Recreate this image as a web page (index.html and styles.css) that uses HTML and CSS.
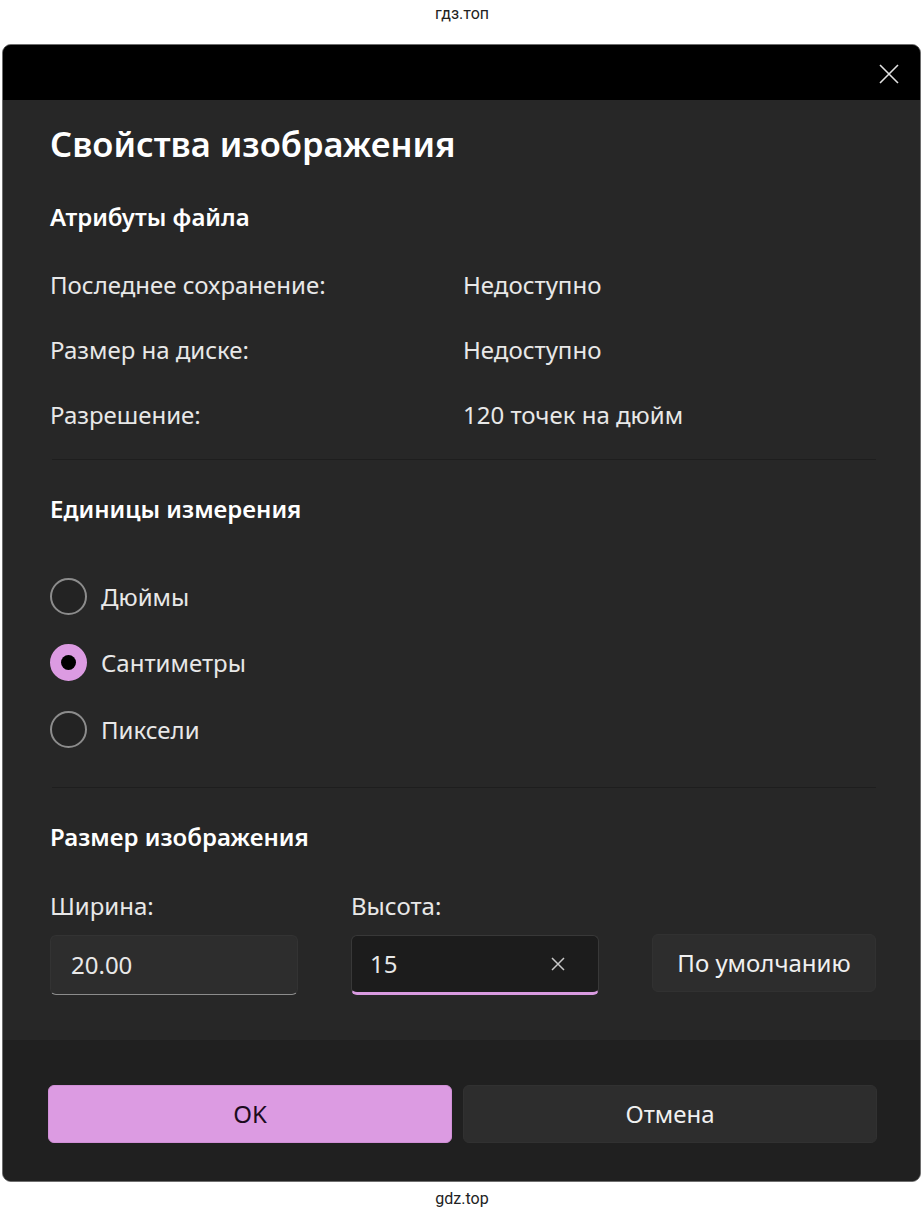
FILE: index.html
```html
<!DOCTYPE html>
<html lang="ru">

<head>
  <meta charset="utf-8" />
  <meta name="viewport" content="width=device-width, initial-scale=1" />
  <title>Свойства изображения</title>
  <link rel="stylesheet" href="styles.css">
</head>

<body>
  <div class="watermark watermark-top">гдз.топ</div>

  <div class="dialog">
    <div class="dialog-bar">
      <button type="button" class="close" aria-label="Закрыть">
        <svg width="20" height="20" viewBox="0 0 20 20">
          <path d="M1 1 L19 19 M19 1 L1 19" stroke="#e2e2e2" stroke-width="1.6" fill="none" />
        </svg>
      </button>
    </div>

    <div class="dialog-body">
      <h1>Свойства изображения</h1>

      <h2>Атрибуты файла</h2>
      <div class="info">
        <span>Последнее сохранение:</span><span>Недоступно</span>
        <span>Размер на диске:</span><span>Недоступно</span>
        <span>Разрешение:</span><span>120 точек на дюйм</span>
      </div>

      <hr class="divider">

      <h2 class="units-title">Единицы измерения</h2>
      <div class="radios">
        <div class="radio"><span class="dot"></span>Дюймы</div>
        <div class="radio checked"><span class="dot"></span>Сантиметры</div>
        <div class="radio"><span class="dot"></span>Пиксели</div>
      </div>

      <hr class="divider divider-low">

      <h2 class="units-title">Размер изображения</h2>
      <div class="size-grid">
        <span class="label">Ширина:</span>
        <span class="label">Высота:</span>
        <span></span>

        <div class="field">20.00</div>
        <div class="field focused">
          <span>15</span>
          <svg width="16" height="16" viewBox="0 0 16 16">
            <path d="M2 2 L14 14 M14 2 L2 14" stroke="#c8c8c8" stroke-width="1.5" fill="none" />
          </svg>
        </div>
        <button type="button" class="btn btn-default">По умолчанию</button>
      </div>
    </div>

    <div class="dialog-footer">
      <button type="button" class="btn btn-primary">OK</button>
      <button type="button" class="btn">Отмена</button>
    </div>
  </div>

  <div class="watermark watermark-bottom">gdz.top</div>
</body>

</html>
```

FILE: styles.css
```css
body {
  margin: 0;
  background: #fff;
  font-family: "Noto Sans", "Open Sans", sans-serif;
  color: #e8e8e8;
}

.watermark {
  font-family: Roboto, "Liberation Sans", sans-serif;
  font-size: 16px;
  color: #222;
  text-align: center;
}

.watermark-top {
  height: 44px;
  line-height: 28px;
}

.watermark-bottom {
  line-height: 34px;
}

.dialog {
  margin-left: 2px;
  width: 917px;
  border: 1px solid #6e6e6e;
  border-radius: 9px;
  overflow: hidden;
  background: #272727;
}

.dialog-bar {
  height: 55px;
  background: #000;
  display: flex;
  justify-content: flex-end;
  align-items: center;
  padding-right: 21px;
}

.close {
  background: none;
  border: 0;
  padding: 0;
  width: 20px;
  height: 20px;
  margin-top: 2px;
}

.dialog-body {
  padding: 22px 44px 45px 47px;
}

h1 {
  margin: 0;
  font-size: 34.5px;
  font-weight: 600;
  line-height: 44px;
  color: #fff;
}

h2 {
  margin: 36px 0 20px;
  font-size: 24px;
  font-weight: 600;
  line-height: 30px;
  color: #fff;
}

.info {
  display: grid;
  grid-template-columns: 413px 1fr;
  grid-auto-rows: 65px;
  align-items: center;
  font-size: 24px;
}

.divider {
  margin: 12px 0 0 2px;
  border: 0;
  height: 1px;
  background: #1e1e1e;
}

.divider-low {
  margin-top: 24px;
}

.units-title {
  margin: 34px 0 39px;
}

.radio {
  height: 66.5px;
  display: flex;
  align-items: center;
  gap: 14px;
  font-size: 24px;
}

.dot {
  width: 33px;
  height: 33px;
  border: 2px solid #8c8c8c;
  border-radius: 50%;
  background: #232323;
  display: flex;
  align-items: center;
  justify-content: center;
}

.radio.checked .dot {
  border-color: #dc9be2;
  background: #dc9be2;
}

.radio.checked .dot::after {
  content: "";
  width: 15px;
  height: 15px;
  border-radius: 50%;
  background: #000;
}

.size-grid {
  display: grid;
  grid-template-columns: 248px 248px 224px;
  column-gap: 53px;
  row-gap: 14px;
}

.label {
  font-size: 24px;
  line-height: 30px;
}

.field {
  box-sizing: border-box;
  height: 60px;
  padding: 0 20px;
  display: flex;
  align-items: center;
  justify-content: space-between;
  font-size: 24px;
  background: #2d2d2d;
  border: 1px solid #333;
  border-bottom: 1px solid #8c8c8c;
  border-radius: 6px;
}

.field.focused {
  background: #1c1c1c;
  border-color: #383838;
  border-bottom: 3px solid #d99be0;
  padding: 0 32px 0 18px;
}

.btn {
  box-sizing: border-box;
  height: 58px;
  border: 1px solid #313131;
  border-radius: 6px;
  background: #2d2d2d;
  color: #f0f0f0;
  font-family: inherit;
  font-size: 24px;
}

.btn-default {
  margin-top: -1px;
}

.dialog-footer {
  background: #202020;
  height: 141px;
  box-sizing: border-box;
  padding: 45px 42px 0 45px;
  display: grid;
  grid-template-columns: 404px 414px;
  column-gap: 11px;
  align-items: start;
}

.btn-primary {
  background: #dc9be2;
  border-color: #d08fd6;
  color: #1c0c1e;
}
```
